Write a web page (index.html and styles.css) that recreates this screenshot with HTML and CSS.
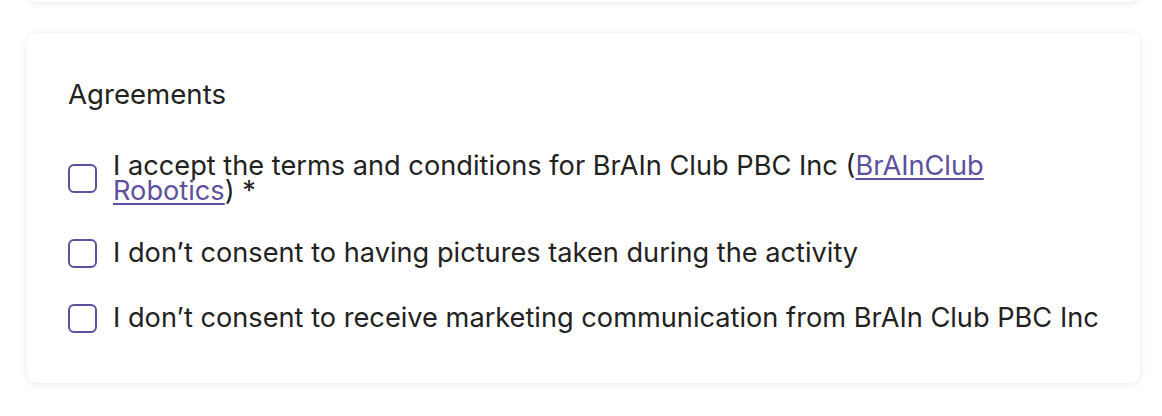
FILE: index.html
```html
<!DOCTYPE html>
<html lang="en">
<head>
<meta charset="utf-8">
<title>Agreements</title>
<link rel="stylesheet" href="styles.css">
</head>
<body>
<div class="page">
  <div class="card card-prev"></div>
  <section class="card agreements">
    <h2 class="title">Agreements</h2>
    <div class="items">
      <label class="item">
        <input type="checkbox" class="box">
        <span class="text">I accept the terms and conditions for BrAIn Club PBC Inc (<a href="#" class="link">BrAInClub Robotics</a>) *</span>
      </label>
      <label class="item">
        <input type="checkbox" class="box">
        <span class="text">I don’t consent to having pictures taken during the activity</span>
      </label>
      <label class="item">
        <input type="checkbox" class="box">
        <span class="text">I don’t consent to receive marketing communication from BrAIn Club PBC Inc</span>
      </label>
    </div>
  </section>
</div>
</body>
</html>
```
FILE: styles.css
```css
html, body {
  margin: 0;
  background: #ffffff;
}
body {
  font-family: Inter, "Noto Sans", sans-serif;
  color: #222222;
}
.page {
  padding: 0 22px 12px 27px;
  display: flex;
  flex-direction: column;
  gap: 31px;
}
.card {
  background: #ffffff;
  border-radius: 10px;
  box-shadow: 0 1px 9px rgba(0, 0, 0, 0.09);
}
.card-prev {
  height: 40px;
  margin-top: -38px;
}
.agreements {
  padding: 49px 40px 50px 41px;
}
.title {
  margin: 0;
  font-size: 27.6px;
  line-height: 24px;
  font-weight: 400;
}
.items {
  margin-top: 48px;
  display: flex;
  flex-direction: column;
  gap: 36px;
}
.item {
  display: flex;
  align-items: center;
  gap: 16px;
}
.box {
  appearance: none;
  -webkit-appearance: none;
  margin: 0;
  flex: none;
  width: 29px;
  height: 29px;
  box-sizing: border-box;
  border: 2.7px solid #5d509e;
  border-radius: 6px;
  background: #ffffff;
}
.text {
  font-size: 27.2px;
  line-height: 24.5px;
  font-weight: 400;
  max-width: 987px;
}
.link {
  color: #5d509e;
  text-decoration: underline;
  text-decoration-thickness: 1.5px;
  text-underline-offset: 3px;
}
```
